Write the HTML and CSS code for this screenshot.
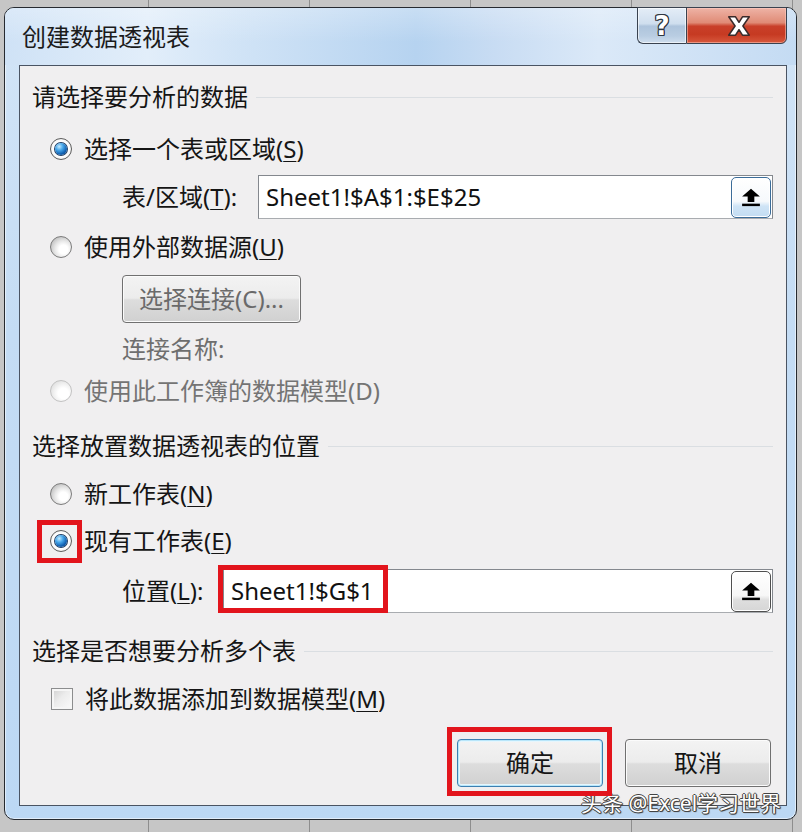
FILE: index.html
```html
<!DOCTYPE html>
<html lang="zh-CN">
<head>
<meta charset="utf-8">
<title>创建数据透视表</title>
<link rel="stylesheet" href="styles.css">
</head>
<body>
<div class="window">
  <div class="titlebar">
    <div class="title">创建数据透视表</div>
    <div class="controls">
      <div class="ctl help"><span class="q">?</span></div>
      <div class="ctl close">
        <svg class="xicon" viewBox="0 0 24 20" width="26" height="22" aria-hidden="true">
          <path d="M2.5 1.5 H8.8 L12 6.6 L15.2 1.5 H21.5 L15.6 10 L21.5 18.5 H15.2 L12 13.4 L8.8 18.5 H2.5 L8.4 10 Z" fill="#ffffff" stroke="#3b2a2a" stroke-width="1.4" stroke-linejoin="round"/>
        </svg>
      </div>
    </div>
  </div>

  <div class="panel">
    <div class="heading"><span>请选择要分析的数据</span><i class="rule"></i></div>

    <div class="opt opt-range"><span class="radio on"></span><span>选择一个表或区域(<u>S</u>)</span></div>

    <div class="field field-range">
      <span class="label label-range">表/区域(<u>T</u>):</span>
      <div class="input">
        <span class="value">Sheet1!$A$1:$E$25</span>
        <span class="pick pick-focus">
          <svg viewBox="0 0 18 18" width="20" height="20" aria-hidden="true"><path d="M9 1.5 L17 8.5 H12 V13.5 H6 V8.5 H1 Z" fill="#000"/><rect x="1" y="15" width="16" height="2.2" fill="#000"/></svg>
        </span>
      </div>
    </div>

    <div class="opt opt-ext"><span class="radio"></span><span>使用外部数据源(<u>U</u>)</span></div>

    <div class="sub sub-btn"><button class="btn btn-conn" type="button">选择连接(C)...</button></div>
    <div class="sub conn-name">连接名称:</div>

    <div class="opt opt-model disabled"><span class="radio dis"></span><span>使用此工作簿的数据模型(D)</span></div>

    <div class="heading heading-place"><span>选择放置数据透视表的位置</span><i class="rule"></i></div>

    <div class="opt opt-new"><span class="radio"></span><span>新工作表(<u>N</u>)</span></div>

    <div class="opt opt-exist"><span class="radio on"><span class="mark mark-radio"></span></span><span>现有工作表(<u>E</u>)</span></div>

    <div class="field field-loc">
      <span class="label label-loc">位置(<u>L</u>):</span>
      <div class="input">
        <span class="mark mark-input"></span>
        <span class="value">Sheet1!$G$1</span>
        <span class="pick">
          <svg viewBox="0 0 18 18" width="20" height="20" aria-hidden="true"><path d="M9 1.5 L17 8.5 H12 V13.5 H6 V8.5 H1 Z" fill="#000"/><rect x="1" y="15" width="16" height="2.2" fill="#000"/></svg>
        </span>
      </div>
    </div>

    <div class="heading heading-multi"><span>选择是否想要分析多个表</span><i class="rule"></i></div>

    <div class="opt opt-check"><span class="check"></span><span>将此数据添加到数据模型(<u>M</u>)</span></div>

    <div class="actions">
      <span class="ok-wrap"><span class="mark mark-ok"></span><button class="btn btn-ok" type="button">确定</button></span>
      <button class="btn" type="button">取消</button>
    </div>
  </div>
</div>
<div class="watermark">头条 @Excel学习世界</div>
</body>
</html>
```

FILE: styles.css
```css
html, body {
  margin: 0;
  padding: 0;
}

body {
  width: 802px;
  height: 832px;
  overflow: hidden;
  position: relative;
  background-color: #c6c6c6;
  background-image: linear-gradient(to right, #8e8e8e 1px, transparent 1px);
  background-size: 161px 100%;
  background-position: 148px 0;
  font-family: "Noto Sans", "Noto Sans CJK SC", sans-serif;
  color: #151515;
}

.window {
  box-sizing: border-box;
  width: 793px;
  height: 813px;
  margin: 7px 0 0 4px;
  border: 1px solid #262a30;
  border-radius: 10px;
  background: linear-gradient(to bottom, #d3e5f7 0%, #c4dcf4 40%, #bcd8f4 100%);
  box-shadow: inset 0 0 0 1px rgba(255, 255, 255, 0.55);
  display: flex;
  flex-direction: column;
}

.titlebar {
  height: 57px;
  display: flex;
  justify-content: space-between;
  align-items: flex-start;
  padding-left: 17px;
  border-radius: 9px 9px 0 0;
  background:
    linear-gradient(to bottom, rgba(255, 255, 255, 0.25), rgba(255, 255, 255, 0) 60%),
    linear-gradient(to right, #cfe2f6 0%, #e2eefa 18%, #d0e3f6 30%, #b6d3f0 52%, #c8dcf3 62%, #dbe9f8 75%, #c4dbf3 100%);
}

.title {
  margin-top: 12px;
  font-size: 24px;
  line-height: 34px;
  color: #1b1b1b;
}

.controls {
  display: flex;
  margin-top: -1px;
  margin-right: 9px;
}

.ctl {
  box-sizing: border-box;
  height: 37px;
  display: flex;
  align-items: center;
  justify-content: center;
  border: 1px solid #39424f;
}

.help {
  width: 49px;
  border-right: none;
  border-radius: 0 0 0 6px;
  background: linear-gradient(to bottom, #e4edf7 0%, #cfdeee 45%, #aec4dc 52%, #b9cde2 80%, #cfdeee 100%);
  box-shadow: inset 0 0 0 1px rgba(255, 255, 255, 0.6);
}

.q {
  font-family: "DejaVu Sans", sans-serif;
  font-weight: bold;
  font-size: 26px;
  line-height: 1;
  color: #ffffff;
  text-shadow:
    -1px 0 0 #2f3640, 1px 0 0 #2f3640, 0 -1px 0 #2f3640, 0 1px 0 #2f3640,
    -1px -1px 0 #2f3640, 1px 1px 0 #2f3640, -1px 1px 0 #2f3640, 1px -1px 0 #2f3640;
}

.close {
  width: 101px;
  border-radius: 0 0 6px 0;
  background: linear-gradient(to bottom, #eeb3a6 0%, #e08b76 42%, #c9402a 52%, #c63a22 75%, #d7583d 100%);
  box-shadow: inset 0 0 0 1px rgba(255, 210, 200, 0.5);
}

.xicon {
  margin-left: 4px;
}

.panel {
  box-sizing: border-box;
  height: 741px;
  margin: 0 9px 0 14px;
  border: 1px solid #4a5463;
  background: #f0eff0;
  padding: 14px 13px 18px 12px;
  display: flex;
  flex-direction: column;
  font-size: 24px;
}

.heading {
  height: 34px;
  line-height: 34px;
  display: flex;
  align-items: center;
  flex: none;
}

.rule {
  flex: 1;
  height: 1px;
  margin-left: 8px;
  background: #dadee2;
}

.heading-place,
.heading-multi {
  margin-top: 21px;
}

.opt {
  height: 34px;
  line-height: 34px;
  display: flex;
  align-items: center;
  gap: 12px;
  margin-left: 18px;
  flex: none;
}

.opt-range { margin-top: 18px; }
.opt-ext { margin-top: 11px; }
.opt-model { margin-top: 8px; }
.opt-new { margin-top: 14px; }
.opt-exist { margin-top: 13px; }
.opt-check { margin-top: 14px; }

.disabled {
  color: #747474;
}

u {
  text-decoration-thickness: 1px;
  text-underline-offset: 3px;
}

.radio {
  box-sizing: border-box;
  width: 22px;
  height: 22px;
  border-radius: 50%;
  border: 1px solid #7c7c7c;
  background: radial-gradient(circle at 62% 62%, #ffffff 25%, #e8e8e8 48%, #b8b8b8 85%);
  position: relative;
  flex: none;
}

.radio.on {
  border-color: #5d5d5d;
  background: radial-gradient(circle at 50% 50%, #ffffff 55%, #dedede 100%);
}

.radio.on::after {
  content: "";
  position: absolute;
  left: 4px;
  top: 4px;
  width: 12px;
  height: 12px;
  border-radius: 50%;
  background: radial-gradient(circle at 35% 30%, #c6ecff 0%, #49a8ea 32%, #1162b3 65%, #0a3c76 100%);
  box-shadow: 0 0 0 1px #1f3f66;
}

.radio.dis {
  border-color: #c2c2c2;
  background: radial-gradient(circle at 62% 62%, #ffffff 30%, #f3f3f3 50%, #dcdcdc 85%);
}

.check {
  box-sizing: border-box;
  width: 22px;
  height: 22px;
  margin-left: 1px;
  border: 1px solid #8c8d8e;
  background: linear-gradient(135deg, #cfcfcf 0%, #ececec 45%, #fbfbfb 100%);
  box-shadow: inset 0 0 0 2px #f6f6f6;
  flex: none;
}

.field {
  height: 44px;
  display: flex;
  align-items: center;
  margin-left: 90px;
  flex: none;
}

.field-range { margin-top: 9px; }
.field-loc { margin-top: 11px; }

.label {
  flex: none;
  line-height: 34px;
}

.label-range { width: 136px; }
.label-loc { width: 101px; }

.input {
  box-sizing: border-box;
  flex: 1;
  height: 44px;
  border: 1px solid #84888e;
  border-bottom-color: #a9acb0;
  background: #ffffff;
  display: flex;
  align-items: center;
  padding: 0 1px 0 7px;
  position: relative;
}

.value {
  font-size: 24px;
  line-height: 34px;
  color: #111;
  flex: 1;
}

.pick {
  box-sizing: border-box;
  width: 40px;
  height: 41px;
  border: 1px solid #4f4f4f;
  border-radius: 5px;
  background: linear-gradient(to bottom, #ffffff 0%, #f7f7f7 60%, #dedede 72%, #d6d6d6 100%);
  box-shadow: inset 0 0 0 1px #ffffff;
  display: flex;
  align-items: center;
  justify-content: center;
  flex: none;
}

.pick-focus {
  border-color: #3b6c99;
  background: linear-gradient(to bottom, #ffffff 0%, #f6f9fc 60%, #cfe4f6 72%, #c2dcf2 100%);
}

.sub {
  margin-left: 90px;
  flex: none;
}

.sub-btn {
  margin-top: 11px;
  height: 48px;
}

.conn-name {
  margin-top: 9px;
  height: 34px;
  line-height: 34px;
  color: #6e6e6e;
}

.btn {
  box-sizing: border-box;
  height: 48px;
  width: 146px;
  border: 1px solid #707070;
  border-radius: 4px;
  background: linear-gradient(to bottom, #f3f3f3 0%, #ececec 48%, #dddddd 52%, #d0d0d0 100%);
  box-shadow: inset 0 0 0 1px #fbfbfb;
  font-family: "Noto Sans", "Noto Sans CJK SC", sans-serif;
  font-size: 24px;
  line-height: 34px;
  color: #151515;
  padding: 0;
  margin: 0;
}

.btn-conn {
  width: 179px;
  color: #6a6a6a;
}

.actions {
  margin-top: 23px;
  height: 48px;
  display: flex;
  justify-content: flex-end;
  gap: 22px;
  margin-right: 2px;
  flex: none;
}

.ok-wrap {
  position: relative;
  display: block;
}

.btn-ok {
  border-color: #3c7fb1;
  box-shadow: inset 0 0 0 1px #b8e6fa, inset 0 0 0 2px #e6f6fd;
  display: block;
}

.mark {
  position: absolute;
  box-sizing: border-box;
  border: 5px solid #e2141c;
  z-index: 2;
}

.mark-radio {
  left: -14px;
  top: -11px;
  width: 45px;
  height: 43px;
}

.mark-input {
  left: -6px;
  top: -5px;
  width: 170px;
  height: 48px;
}

.mark-ok {
  left: -10px;
  top: -12px;
  width: 165px;
  height: 69px;
}

.watermark {
  position: absolute;
  left: 581px;
  top: 789px;
  font-family: "Noto Sans", "Noto Sans CJK SC", sans-serif;
  font-size: 21px;
  line-height: 28px;
  color: #ffffff;
  white-space: nowrap;
  text-shadow:
    -1px 0 0 #444, 1px 0 0 #444, 0 -1px 0 #444, 0 1px 0 #444,
    1px 1px 1px #333;
}
```
